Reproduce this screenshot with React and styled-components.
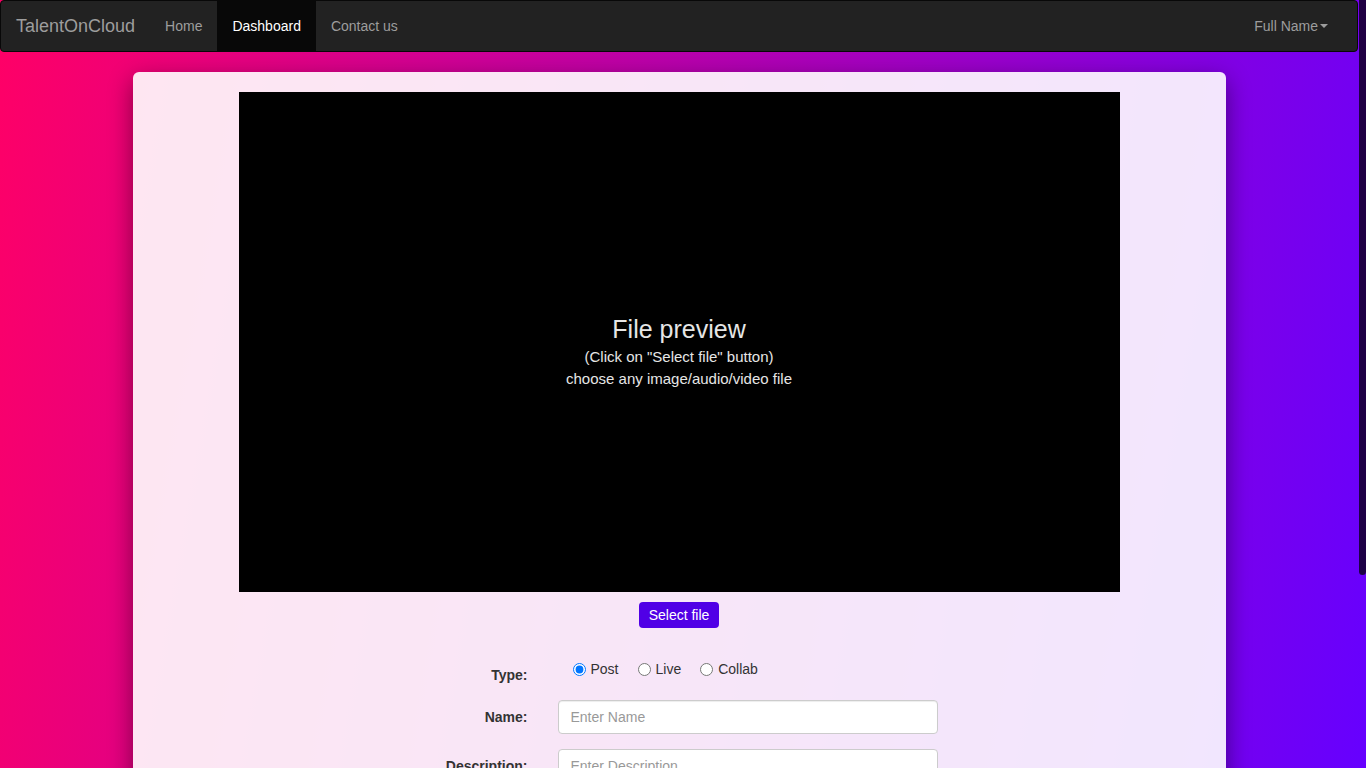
import styled, { createGlobalStyle } from 'styled-components'

const GlobalStyle = createGlobalStyle`
  html, body {
    margin: 0;
    padding: 0;
  }

  body {
    font-family: "Liberation Sans", Arial, sans-serif;
    font-size: 14px;
    line-height: 20px;
    color: #333;
    background: linear-gradient(100deg, #ff0066 0%, #6600ff 100%) fixed;
    min-height: 100vh;
  }

  * {
    box-sizing: border-box;
  }
`

const App = () => {
  return (
    <>
      <GlobalStyle />
      <Page>
        <Navbar>
          <Brand>TalentOnCloud</Brand>
          <NavList>
            <NavItem>Home</NavItem>
            <NavItem $active>Dashboard</NavItem>
            <NavItem>Contact us</NavItem>
          </NavList>
          <UserMenu>
            Full Name<Caret />
          </UserMenu>
        </Navbar>

        <Card>
          <Preview>
            <PreviewTitle>File preview</PreviewTitle>
            <PreviewHint>(Click on "Select file" button)</PreviewHint>
            <PreviewHint>choose any image/audio/video file</PreviewHint>
          </Preview>
          <SelectButton>Select file</SelectButton>

          <Form>
            <Label $top={14}>Type:</Label>
            <RadioGroup>
              <RadioLabel>
                <input type="radio" name="type" defaultChecked />
                Post
              </RadioLabel>
              <RadioLabel>
                <input type="radio" name="type" />
                Live
              </RadioLabel>
              <RadioLabel>
                <input type="radio" name="type" />
                Collab
              </RadioLabel>
            </RadioGroup>

            <Label>Name:</Label>
            <Input placeholder="Enter Name" />

            <Label>Description:</Label>
            <TextArea placeholder="Enter Description" rows={4} />

            <Label>Tags:</Label>
            <Input placeholder="Enter Tags" />

            <span />
            <SubmitButton>Upload</SubmitButton>
          </Form>
        </Card>
      </Page>
      <ScrollThumb />
    </>
  )
}

// page content leaves room for the window scrollbar on the right
const Page = styled.div`
  margin-right: 8px;
  padding-bottom: 20px;
`

// scrollbar thumb drawn over the right edge (track is transparent)
const ScrollThumb = styled.div`
  position: fixed;
  top: 0;
  right: 0;
  width: 7px;
  height: 575px;
  background: rgba(0, 0, 0, 0.72);
  border-radius: 0 0 4px 4px;
`

const Navbar = styled.nav`
  display: flex;
  align-items: stretch;
  height: 52px;
  padding: 0 15px 0 0;
  background-color: #222;
  border: 1px solid #080808;
  border-radius: 4px;
  margin-bottom: 20px;
`

const Brand = styled.a`
  padding: 15px;
  font-size: 18px;
  line-height: 20px;
  color: #9d9d9d;
`

const NavList = styled.ul`
  display: flex;
  list-style: none;
  margin: 0;
  padding: 0;
`

const NavItem = styled.li`
  padding: 15px;
  line-height: 20px;
  color: ${({ $active }) => ($active ? '#fff' : '#9d9d9d')};
  background-color: ${({ $active }) => ($active ? '#080808' : 'transparent')};
`

const UserMenu = styled.div`
  margin-left: auto;
  display: flex;
  align-items: center;
  padding: 0 14px 0 15px;
  color: #9d9d9d;
`

const Caret = styled.span`
  display: inline-block;
  width: 0;
  height: 0;
  margin-left: 2px;
  border-top: 4px solid #9d9d9d;
  border-left: 4px solid transparent;
  border-right: 4px solid transparent;
`

const Card = styled.div`
  width: 1093px;
  margin: 0 auto;
  padding: 20px 0 160px;
  display: flex;
  flex-direction: column;
  align-items: center;
  background-color: rgba(255, 255, 255, 0.9);
  border-radius: 6px;
  box-shadow: 0 8px 24px rgba(0, 0, 0, 0.45);
`

const Preview = styled.div`
  width: 881px;
  height: 500px;
  padding-top: 18px;
  background: #000;
  color: #e6e6e6;
  display: flex;
  flex-direction: column;
  align-items: center;
  justify-content: center;
  text-align: center;
`

const PreviewTitle = styled.div`
  font-size: 25px;
  line-height: 32px;
  margin-bottom: 1px;
`

const PreviewHint = styled.div`
  font-size: 15px;
  line-height: 22px;
`

const SelectButton = styled.button`
  margin-top: 10px;
  padding: 3px 10px;
  font-family: inherit;
  font-size: 14px;
  line-height: 20px;
  color: #fff;
  background-color: #5000e6;
  border: none;
  border-radius: 4px;
`

const Form = styled.div`
  margin-top: 23px;
  display: grid;
  grid-template-columns: 107px 380px;
  column-gap: 30px;
  row-gap: 15px;
`

const Label = styled.label`
  text-align: right;
  font-weight: bold;
  padding-top: ${({ $top }) => $top ?? 7}px;
  line-height: 20px;
  color: #333;
`

const RadioGroup = styled.div`
  display: flex;
  align-items: center;
  gap: 14px;
  padding: 2px 0 0 10px;
  height: 34px;
`

const RadioLabel = styled.label`
  display: flex;
  align-items: center;
  line-height: 20px;

  input {
    margin: 0 5px 0 5px;
    width: 13px;
    height: 13px;
  }
`

const Input = styled.input`
  height: 34px;
  padding: 6px 12px;
  font-family: inherit;
  font-size: 14px;
  color: #555;
  background: #fff;
  border: 1px solid #ccc;
  border-radius: 4px;
  box-shadow: inset 0 1px 1px rgba(0, 0, 0, 0.075);

  &::placeholder {
    color: #999;
  }
`

const TextArea = styled.textarea`
  padding: 6px 12px;
  font-family: inherit;
  font-size: 14px;
  line-height: 20px;
  color: #555;
  background: #fff;
  border: 1px solid #ccc;
  border-radius: 4px;
  resize: vertical;

  &::placeholder {
    color: #999;
  }
`

const SubmitButton = styled.button`
  justify-self: start;
  padding: 6px 12px;
  font-family: inherit;
  font-size: 14px;
  line-height: 20px;
  color: #fff;
  background-color: #5000e6;
  border: none;
  border-radius: 4px;
`

export default App
